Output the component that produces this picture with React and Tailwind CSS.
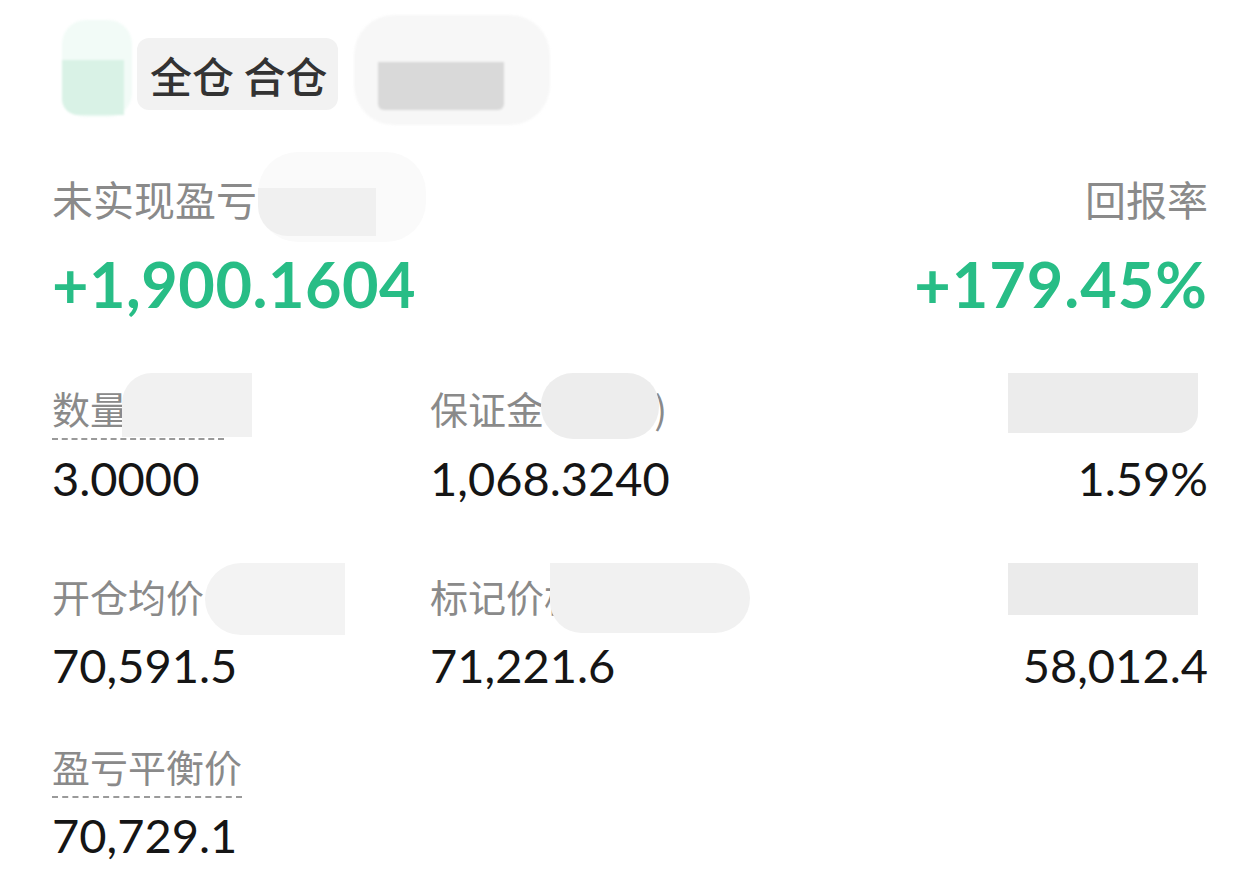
import React from 'react';

const cjk = { fontFamily: '"Noto Sans CJK SC", "Noto Sans", sans-serif' };
const num = { fontFamily: 'Lato, "Noto Sans CJK SC", sans-serif' };

const Label = ({ text, dashed, children, className = 'text-[38px]' }) => (
    <div className={`relative h-[48px] leading-[48px] text-[#8a8a8a] ${className}`} style={cjk}>
        <span className={dashed ? 'border-b-2 border-dashed border-[#9a9a9a] pb-[3px]' : ''}>{text}</span>
        {children}
    </div>
);

const Value = ({ text, className = '' }) => (
    <div className={`h-[60px] leading-[60px] text-[47px] text-[#151515] ${className}`} style={num}>{text}</div>
);

const App = () => {
    return (
        <div className="w-[1260px] h-[896px] bg-white overflow-hidden px-[52px] pt-[38px]">
            {/* Top tags */}
            <div className="relative flex items-center h-[72px]">
                <div className="absolute left-[10px] top-[-18px] w-[70px] h-[97px] rounded-[24px] bg-[#f2fbf7] blur-[1px]">
                    <div className="mt-[40px] h-[55px] w-[62px] bg-[#d9f2e6] rounded-bl-[16px]" />
                </div>
                <div className="ml-[85px] h-[72px] pl-[13px] pr-[11px] flex items-center rounded-[12px] bg-[#f2f2f2] text-[42px] font-medium text-[#333]" style={cjk}>
                    全仓 合仓
                </div>
                <div className="absolute left-[302px] top-[-23px] w-[196px] h-[110px] rounded-[40px] bg-[#f7f7f7] blur-[1px]">
                    <div className="ml-[24px] mt-[47px] w-[126px] h-[48px] bg-[#d9d9d9] rounded-b-[6px]" />
                </div>
            </div>

            {/* PnL */}
            <div className="mt-[64px] flex justify-between">
                <div>
                    <Label text="未实现盈亏" className="text-[41px]">
                        <div className="absolute left-[206px] top-[-22px] w-[168px] h-[90px] rounded-[40px] bg-[#fafafa]">
                            <div className="mt-[36px] w-[118px] h-[48px] bg-[#f0f0f0] rounded-bl-[30px]" />
                        </div>
                    </Label>
                    <div className="mt-[26px] h-[72px] leading-[72px] text-[63px] font-bold tracking-[0.5px] text-[#28bd86]" style={num}>+1,900.1604</div>
                </div>
                <div className="flex flex-col items-end">
                    <Label text="回报率" className="text-[41px]" />
                    <div className="mt-[26px] h-[72px] leading-[72px] text-[63px] font-bold tracking-[1px] text-[#28bd86]" style={num}>+179.45%</div>
                </div>
            </div>

            {/* Row 1 */}
            <div className="mt-[64px] grid grid-cols-[378px_1fr_auto]">
                <div>
                    <Label text="数量(BTC)" dashed>
                        <div className="absolute left-[70px] top-[-11px] w-[130px] h-[64px] bg-[#f1f1f1] rounded-tl-[30px]" />
                    </Label>
                    <Value text="3.0000" className="mt-[16px]" />
                </div>
                <div>
                    <Label text="保证金(USDT)">
                        <div className="absolute left-[111px] top-[-11px] w-[118px] h-[66px] bg-[#ededed] rounded-[32px]" />
                    </Label>
                    <Value text="1,068.3240" className="mt-[16px]" />
                </div>
                <div className="flex flex-col items-end">
                    <div className="relative h-[48px] w-[200px]">
                        <div className="absolute right-[10px] top-[-11px] w-[190px] h-[60px] bg-[#ececec] rounded-br-[20px]" />
                    </div>
                    <Value text="1.59%" className="mt-[16px]" />
                </div>
            </div>

            {/* Row 2 */}
            <div className="mt-[64px] grid grid-cols-[378px_1fr_auto]">
                <div>
                    <Label text="开仓均价">
                        <div className="absolute left-[153px] top-[-9px] w-[140px] h-[72px] bg-[#f3f3f3] rounded-l-[36px]" />
                    </Label>
                    <Value text="70,591.5" className="mt-[15px]" />
                </div>
                <div>
                    <Label text="标记价格">
                        <div className="absolute left-[120px] top-[-9px] w-[200px] h-[70px] bg-[#f1f1f1] rounded-bl-[36px] rounded-r-[40px]" />
                    </Label>
                    <Value text="71,221.6" className="mt-[15px]" />
                </div>
                <div className="flex flex-col items-end">
                    <div className="relative h-[48px] w-[200px]">
                        <div className="absolute right-[10px] top-[-9px] w-[190px] h-[52px] bg-[#ebebeb]" />
                    </div>
                    <Value text="58,012.4" className="mt-[15px]" />
                </div>
            </div>

            {/* Row 3 */}
            <div className="mt-[47px]">
                <Label text="盈亏平衡价" dashed />
                <Value text="70,729.1" className="mt-[15px]" />
            </div>
        </div>
    );
};

export default App;
